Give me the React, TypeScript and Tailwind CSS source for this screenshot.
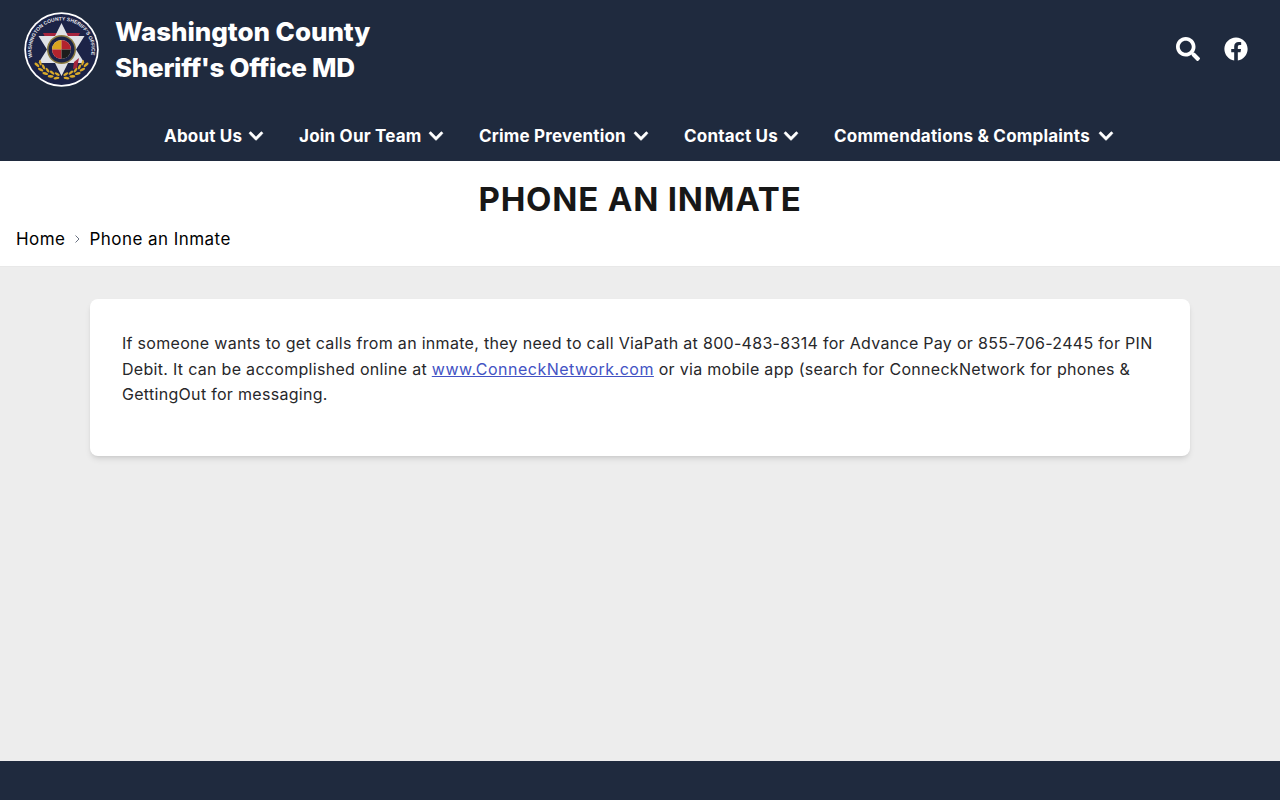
import React from 'react'
import { FaChevronDown, FaFacebook, FaSearch } from 'react-icons/fa'

const navItems = [
  { label: 'About Us', width: 'w-[76px]' },
  { label: 'Join Our Team', width: 'w-[121px]' },
  { label: 'Crime Prevention', width: 'w-[146px]' },
  { label: 'Contact Us', width: 'w-[91px]' },
  { label: 'Commendations & Complaints', width: 'w-[256px]' },
]

// wreath leaves along the bottom of the seal, left and right of centre
const leafAngles = [10, 22, 34, 46, 58]

const Seal = () => (
  <svg viewBox="0 0 150 150" className="w-[75px] h-[75px] shrink-0">
    <circle cx="75" cy="75" r="74.5" fill="#fff" />
    <circle cx="75" cy="75" r="71" fill="#1c2347" />
    <defs>
      <path id="sealRing" d="M 17 92 A 60 60 0 1 1 133 92" />
    </defs>
    <text fontSize="10" fontWeight="700" fill="#e8e8ee" fontFamily="Liberation Sans, sans-serif">
      <textPath href="#sealRing" startOffset="1" textLength="212" lengthAdjust="spacingAndGlyphs">
        WASHINGTON COUNTY SHERIFF'S OFFICE
      </textPath>
    </text>
    <path d="M38 42 H112 L104 58 H46 Z" fill="#a5243d" />
    <polygon
      points="75,22 88,48 121,48 104,75 121,102 88,102 75,128 62,102 29,102 46,75 29,48 62,48"
      fill="#dfe1e6"
    />
    <circle cx="75" cy="75" r="29" fill="#8a7a3f" />
    <circle cx="75" cy="75" r="26" fill="#1c2347" />
    <circle cx="75" cy="75" r="19" fill="#f1ede0" />
    <path d="M75 56 V75 H56 A19 19 0 0 1 75 56 Z" fill="#d9a520" />
    <path d="M75 56 A19 19 0 0 1 94 75 H75 Z" fill="#b3242e" />
    <path d="M56 75 H75 V94 A19 19 0 0 1 56 75 Z" fill="#b3242e" />
    <path d="M75 75 H94 A19 19 0 0 1 75 94 Z" fill="#1c1c1c" />
    <path d="M100 100 L110 92 L106 112 L98 114 Z" fill="#a5243d" />
    {leafAngles.map((a) => (
      <g key={a} fill="#d8a92a">
        <ellipse cx="75" cy="133" rx="6" ry="2.6" transform={`rotate(${a} 75 75) rotate(-18 75 133)`} />
        <ellipse cx="75" cy="125" rx="5.5" ry="2.4" transform={`rotate(${a} 75 75) rotate(18 75 125)`} />
        <ellipse cx="75" cy="133" rx="6" ry="2.6" transform={`rotate(${-a} 75 75) rotate(18 75 133)`} />
        <ellipse cx="75" cy="125" rx="5.5" ry="2.4" transform={`rotate(${-a} 75 75) rotate(-18 75 125)`} />
      </g>
    ))}
  </svg>
)

export default function App() {
  return (
    <div className="min-h-screen flex flex-col bg-[#ededed] font-['Inter',sans-serif]">
      <header className="bg-[#1f2a3e] text-white h-[161px] flex flex-col">
        <div className="flex items-start justify-between pl-6 pr-[32px] pt-3">
          <div className="flex items-center gap-4">
            <Seal />
            <div className="text-[26px] leading-9 font-extrabold">
              <div className="tracking-[-0.05px]">Washington County</div>
              <div className="tracking-[-0.3px]">Sheriff's Office MD</div>
            </div>
          </div>
          <div className="flex items-center gap-6 pt-[25px]">
            <FaSearch className="w-6 h-6" />
            <FaFacebook className="w-6 h-6" />
          </div>
        </div>
        <nav className="flex justify-center gap-[35px] mt-[37px] pr-[2px]">
          {navItems.map((item) => (
            <div key={item.label} className="flex items-center gap-2">
              <span className={`${item.width} text-[17px] leading-6 font-bold whitespace-nowrap tracking-[0.2px]`}>{item.label}</span>
              <FaChevronDown className="w-4 h-4 stroke-[20]" />
            </div>
          ))}
        </nav>
      </header>

      <div className="bg-white h-[106px] border-b border-[#e8e8e8]">
        <h1 className="text-center text-[33px] leading-10 font-bold text-[#171717] pt-[18px] h-[58px] tracking-[0.8px]">PHONE AN INMATE</h1>
        <div className="flex items-center px-4 mt-2 text-[17px] leading-6 text-black tracking-[0.45px]">
          <span>Home</span>
          <svg viewBox="0 0 24 24" className="w-3 h-3 mx-[6px] text-gray-500" fill="none" stroke="currentColor" strokeWidth="2">
            <path d="M9 5l7 7-7 7" />
          </svg>
          <span>Phone an Inmate</span>
        </div>
      </div>

      <main className="flex-1 px-[90px] pt-8">
        <div className="bg-white rounded-lg shadow-md h-[157px] px-8 pt-8 text-base leading-[25.6px] tracking-[0.3px] text-[#27272a]">
          <p>
            If someone wants to get calls from an inmate, they need to call ViaPath at 800-483-8314 for Advance Pay or 855-706-2445 for PIN Debit. It can be accomplished online at{' '}
            <a href="#" className="text-[#4353c4] underline tracking-[0.5px]">www.ConneckNetwork.com</a>{' '}
            or via mobile app (search for ConneckNetwork for phones &amp; GettingOut for messaging.
          </p>
        </div>
      </main>

      <footer className="bg-[#1f2a3e] h-[39px]" />
    </div>
  )
}
